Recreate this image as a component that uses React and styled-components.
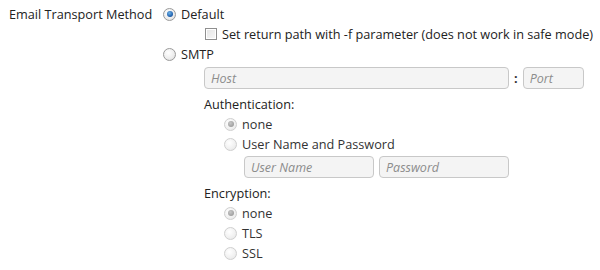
import styled, { createGlobalStyle, css } from 'styled-components'

const GlobalStyle = createGlobalStyle`
  body {
    margin: 0;
    background: #fff;
    font-family: "Open Sans", "Noto Sans", sans-serif;
    font-size: 12.7px;
    color: #222;
  }
`

const Form = styled.div`
  display: grid;
  grid-template-columns: 163px 1fr;
  padding: 4px 0 0 0;
`

const FieldLabel = styled.div`
  padding-left: 9px;
  line-height: 20px;
`

const Column = styled.div`
  display: flex;
  flex-direction: column;
`

const Option = styled.label`
  display: flex;
  align-items: center;
  gap: 5px;
  height: 20px;
  margin-left: ${(p) => p.$indent || 0}px;
  color: ${(p) => (p.$muted ? '#333' : '#222')};
  white-space: nowrap;
`

const Radio = styled.span`
  position: relative;
  width: 13px;
  height: 13px;
  border-radius: 50%;
  box-sizing: border-box;
  border: 1px solid ${(p) => (p.$disabled ? '#cfcfcf' : '#9a9a9a')};
  background: ${(p) =>
    p.$disabled
      ? 'radial-gradient(circle at 40% 35%, #ffffff 0%, #f0f0f0 60%, #e2e2e2 100%)'
      : 'radial-gradient(circle at 40% 35%, #ffffff 0%, #ececec 60%, #d4d4d4 100%)'};
  flex-shrink: 0;

  ${(p) =>
    p.$checked &&
    css`
      &::after {
        content: '';
        position: absolute;
        left: 2.5px;
        top: 2.5px;
        width: 6px;
        height: 6px;
        border-radius: 50%;
        background: ${p.$disabled
          ? 'radial-gradient(circle at 40% 35%, #c8c8c8, #8f8f8f)'
          : 'radial-gradient(circle at 40% 35%, #6fb3e8, #1a5aa8 70%, #123f7a)'};
      }
    `}
`

const Check = styled.span`
  width: 12px;
  height: 12px;
  box-sizing: border-box;
  border: 1px solid #8f8f8f;
  background: linear-gradient(135deg, #e4e4e4, #f8f8f8);
  box-shadow: inset 0 0 0 1px #fff;
  flex-shrink: 0;
`

const Panel = styled.div`
  display: flex;
  flex-direction: column;
  margin-left: ${(p) => p.$indent}px;
  margin-top: ${(p) => p.$top || 0}px;
`

const Heading = styled.div`
  line-height: 20px;
  margin-top: ${(p) => p.$top || 0}px;
`

const InputRow = styled.div`
  display: flex;
  align-items: center;
  gap: ${(p) => p.$gap || 5}px;
  margin-left: ${(p) => p.$indent || 0}px;
  margin-top: ${(p) => p.$top || 0}px;
`

const Input = styled.input`
  width: ${(p) => p.$w}px;
  height: 22px;
  box-sizing: border-box;
  border: 1px solid #c8c8c8;
  border-radius: 4px;
  background: #f4f4f4;
  padding: 0 6px;
  font-family: inherit;
  font-size: 12.5px;
  outline: none;

  &::placeholder {
    color: #8c8c8c;
    font-style: italic;
  }
`

const Colon = styled.span`
  font-weight: bold;
  color: #333;
`

export default function App() {
  return (
    <>
      <GlobalStyle />
      <Form>
        <FieldLabel>Email Transport Method</FieldLabel>
        <Column>
          <Option>
            <Radio $checked />
            Default
          </Option>
          <Option $indent={42}>
            <Check />
            Set return path with -f parameter (does not work in safe mode)
          </Option>
          <Option>
            <Radio />
            SMTP
          </Option>
          <Panel $indent={41} $top={3}>
            <InputRow $gap={5}>
              <Input $w={305} placeholder="Host" />
              <Colon>:</Colon>
              <Input $w={61} placeholder="Port" />
            </InputRow>
            <Heading $top={5}>Authentication:</Heading>
            <Option $indent={20} $muted>
              <Radio $checked $disabled />
              none
            </Option>
            <Option $indent={20} $muted>
              <Radio $disabled />
              User Name and Password
            </Option>
            <InputRow $indent={40} $top={2}>
              <Input $w={130} placeholder="User Name" />
              <Input $w={130} placeholder="Password" />
            </InputRow>
            <Heading $top={5}>Encryption:</Heading>
            <Option $indent={20} $muted>
              <Radio $checked $disabled />
              none
            </Option>
            <Option $indent={20} $muted>
              <Radio $disabled />
              TLS
            </Option>
            <Option $indent={20} $muted>
              <Radio $disabled />
              SSL
            </Option>
          </Panel>
        </Column>
      </Form>
    </>
  )
}
